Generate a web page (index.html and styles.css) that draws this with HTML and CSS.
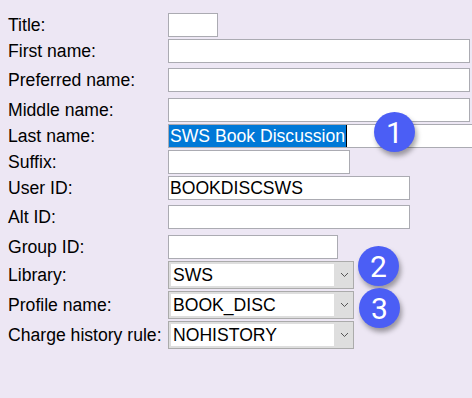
FILE: index.html
```html
<!DOCTYPE html>
<html lang="en">

<head>
    <meta charset="UTF-8">
    <title>User</title>
    <link rel="stylesheet" href="styles.css">
</head>

<body>

    <section id="form">

        <div class="row">
            <label>Title:</label>
            <input class="w-title" type="text">
        </div>
        <div class="row">
            <label>First name:</label>
            <input class="w-long" type="text">
        </div>
        <div class="row gap5">
            <label>Preferred name:</label>
            <input class="w-long" type="text">
        </div>
        <div class="row gap6">
            <label>Middle name:</label>
            <input class="w-long" type="text">
        </div>
        <div class="row">
            <label>Last name:</label>
            <div class="fake-input w-last"><span class="valgt">SWS Book Discussion</span><span class="caret"></span></div>
            <div class="badge one">1</div>
        </div>
        <div class="row">
            <label>Suffix:</label>
            <input class="w-suffix" type="text">
        </div>
        <div class="row">
            <label>User ID:</label>
            <input class="w-id" type="text" value="BOOKDISCSWS">
        </div>
        <div class="row gap5">
            <label>Alt ID:</label>
            <input class="w-id" type="text">
        </div>
        <div class="row gap6">
            <label>Group ID:</label>
            <input class="w-group" type="text">
        </div>
        <div class="row">
            <label>Library:</label>
            <div class="dropdown">
                <div class="value">SWS</div>
                <svg class="chevron" width="9" height="6" viewBox="0 0 9 6"><path d="M1 1 L4.5 4.5 L8 1" fill="none" stroke="#555" stroke-width="1"/></svg>
            </div>
            <div class="badge two">2</div>
        </div>
        <div class="row">
            <label>Profile name:</label>
            <div class="dropdown">
                <div class="value">BOOK_DISC</div>
                <svg class="chevron" width="9" height="6" viewBox="0 0 9 6"><path d="M1 1 L4.5 4.5 L8 1" fill="none" stroke="#555" stroke-width="1"/></svg>
            </div>
            <div class="badge three">3</div>
        </div>
        <div class="row">
            <label>Charge history rule:</label>
            <div class="dropdown">
                <div class="value">NOHISTORY</div>
                <svg class="chevron" width="9" height="6" viewBox="0 0 9 6"><path d="M1 1 L4.5 4.5 L8 1" fill="none" stroke="#555" stroke-width="1"/></svg>
            </div>
        </div>

    </section>

</body></html>
```

FILE: styles.css
```css
html,
body {
    margin: 0;
    background-color: #ede7f4;
    overflow: hidden;
}

body {
    font-family: 'Liberation Sans', Arial, sans-serif;
    font-size: 17.6px;
    color: black;
}

#form {
    padding: 13px 0 0 8px;
    display: flex;
    flex-direction: column;
    gap: 2px;
}

.row {
    position: relative;
    display: flex;
    align-items: center;
}

.gap5 {
    margin-top: 3px;
}

.gap6 {
    margin-top: 4px;
}

label {
    width: 160px;
    flex-shrink: 0;
    white-space: nowrap;
}

input,
.fake-input {
    box-sizing: border-box;
    height: 24px;
    border: 1px solid #ababb2;
    background-color: white;
    font-family: 'Liberation Sans', Arial, sans-serif;
    font-size: 17.6px;
    padding: 0 1px;
    margin: 0;
    outline: none;
    flex-shrink: 0;
}

.fake-input {
    display: flex;
    align-items: center;
    padding: 0;
}

.valgt {
    background-color: #0078d7;
    color: white;
    padding: 0 1px 0 1px;
    line-height: 22px;
}

.caret {
    width: 1px;
    height: 22px;
    background-color: black;
}

.w-title {
    width: 50px;
}

.w-long {
    width: 302px;
}

.w-last {
    width: 304px;
    border-right: none;
}

.w-suffix {
    width: 182px;
}

.w-id {
    width: 242px;
}

.w-group {
    width: 170px;
}

.dropdown {
    box-sizing: border-box;
    width: 186px;
    height: 28px;
    border: 1px solid #ababab;
    background-color: #dedede;
    padding: 2px;
    display: flex;
    align-items: center;
    flex-shrink: 0;
}

.dropdown .value {
    width: 163px;
    height: 22px;
    line-height: 22px;
    background-color: white;
    padding-left: 2px;
    box-sizing: border-box;
}

.chevron {
    margin-left: 6px;
}

.badge {
    position: absolute;
    width: 41px;
    height: 40px;
    border-radius: 50%;
    background-color: #4b5ef5;
    color: white;
    font-family: Roboto, 'Liberation Sans', sans-serif;
    font-size: 30px;
    display: flex;
    align-items: center;
    justify-content: center;
    box-shadow: 2px 4px 5px rgba(0, 0, 0, 0.35);
}

.one {
    left: 366px;
    top: -12px;
}

.two {
    left: 350px;
    top: -15px;
}

.three {
    left: 351px;
    top: -3px;
}
```
